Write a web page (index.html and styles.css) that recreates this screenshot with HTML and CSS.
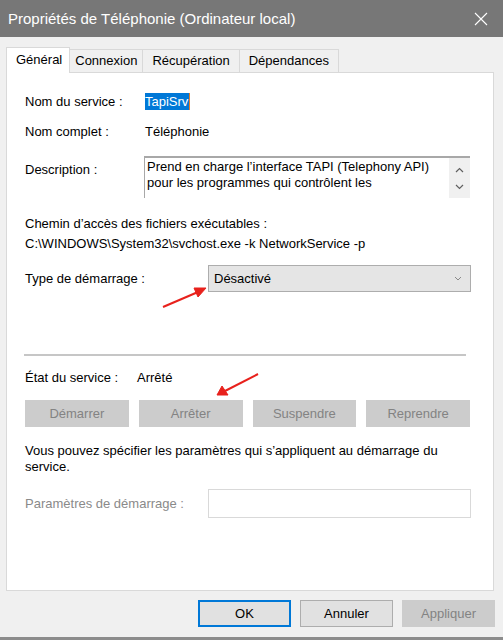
FILE: index.html
```html
<!DOCTYPE html>
<html lang="fr">
<head>
<meta charset="utf-8">
<title>Propriétés de Téléphonie</title>
<link rel="stylesheet" href="styles.css">
</head>
<body>
<div class="window">
  <div class="titlebar">
    <span class="title">Propriétés de Téléphonie (Ordinateur local)</span>
    <svg class="close" width="14" height="14" viewBox="0 0 14 14"><path d="M1 1 L13 13 M13 1 L1 13" stroke="#ffffff" stroke-width="1.1" fill="none"/></svg>
  </div>
  <div class="tabs">
    <div class="tab active">Général</div>
    <div class="tab">Connexion</div>
    <div class="tab wide-tab">Récupération</div>
    <div class="tab wide-tab">Dépendances</div>
  </div>
  <div class="panel">
    <div class="row r-name"><span class="label">Nom du service :</span><span class="selected">TapiSrv</span></div>
    <div class="row r-full"><span class="label">Nom complet :</span><span>Téléphonie</span></div>
    <div class="row r-desc">
      <span class="label desc-label">Description :</span>
      <div class="textarea">
        <div class="ta-text">Prend en charge l’interface TAPI (Telephony API)<br>pour les programmes qui contrôlent les</div>
        <div class="scroll">
          <svg width="9" height="6" viewBox="0 0 9 6"><path d="M1 5 L4.5 1.5 L8 5" stroke="#606060" stroke-width="1.2" fill="none"/></svg>
          <svg width="9" height="6" viewBox="0 0 9 6"><path d="M1 1 L4.5 4.5 L8 1" stroke="#606060" stroke-width="1.2" fill="none"/></svg>
        </div>
      </div>
    </div>
    <div class="path-label">Chemin d’accès des fichiers exécutables :</div>
    <div class="path">C:\WINDOWS\System32\svchost.exe -k NetworkService -p</div>
    <div class="row r-type">
      <span class="label wide">Type de démarrage :</span>
      <div class="combo"><span>Désactivé</span><svg width="8" height="5" viewBox="0 0 8 5"><path d="M1 1 L4 4 L7 1" stroke="#8a8a8a" stroke-width="1" fill="none"/></svg></div>
    </div>
    <div class="sep"></div>
    <div class="row r-state"><span class="label state">État du service :</span><span>Arrêté</span></div>
    <div class="btn-row">
      <div class="btn disabled">Démarrer</div>
      <div class="btn disabled">Arrêter</div>
      <div class="btn disabled">Suspendre</div>
      <div class="btn disabled">Reprendre</div>
    </div>
    <p class="info">Vous pouvez spécifier les paramètres qui s’appliquent au démarrage du<br>service.</p>
    <div class="row r-params">
      <span class="label wide muted">Paramètres de démarrage :</span>
      <div class="input"></div>
    </div>
  </div>
  <div class="footer">
    <div class="fbtn default">OK</div>
    <div class="fbtn">Annuler</div>
    <div class="fbtn disabled">Appliquer</div>
  </div>
  <svg class="annot" width="503" height="640" viewBox="0 0 503 640">
    <g stroke="#e8211c" stroke-width="2" fill="#e8211c">
      <line x1="163" y1="307" x2="198" y2="292"/>
      <polygon points="206,288 194,288 198,297" stroke-width="1"/>
      <line x1="258" y1="374" x2="225" y2="391"/>
      <polygon points="217,395 222,386 228,395" stroke-width="1"/>
    </g>
  </svg>
</div>
</body>
</html>
```
FILE: styles.css
```css
html, body {
  margin: 0;
  padding: 0;
}
body {
  background: #f0f0f0;
  font-family: "Liberation Sans", Arial, sans-serif;
  font-size: 13px;
  color: #000;
}
.window {
  position: relative;
  width: 503px;
  height: 640px;
  box-sizing: border-box;
  background: #f0f0f0;
  border-bottom: 3px solid #8c8c8c;
  overflow: hidden;
}
.titlebar {
  height: 37px;
  background: #777777;
  display: flex;
  align-items: center;
  justify-content: space-between;
  padding: 0 15px 0 8px;
}
.title {
  color: #ffffff;
  font-size: 15px;
}
.close {
  display: block;
}
.tabs {
  display: flex;
  align-items: flex-end;
  height: 26px;
  margin-top: 10px;
  margin-bottom: -1px;
  padding-left: 6px;
  position: relative;
  z-index: 1;
}
.tab {
  box-sizing: border-box;
  height: 23px;
  margin-bottom: 1px;
  margin-left: -1px;
  padding: 0 5px;
  border: 1px solid #d9d9d9;
  border-bottom: none;
  background: #f0f0f0;
  line-height: 22px;
}
.tab.wide-tab {
  padding: 0 9px;
}
.tab.active {
  height: 26px;
  margin-bottom: 0;
  margin-left: 0;
  margin-right: 0;
  padding: 0 7px 0 9px;
  background: #ffffff;
  line-height: 24px;
  position: relative;
  z-index: 2;
}
.tab.active + .tab {
  border-left: none;
  margin-left: 0;
}
.panel {
  box-sizing: border-box;
  height: 519px;
  margin: 0 9px 0 6px;
  background: #ffffff;
  border: 1px solid #d9d9d9;
  padding: 0 22px 0 18px;
  display: flex;
  flex-direction: column;
}
.row {
  display: flex;
  align-items: center;
}
.label {
  width: 120px;
  flex: none;
}
.label.wide {
  width: 183px;
}
.label.state {
  width: 112px;
}
.muted {
  color: #8a8a8a;
}
.r-name {
  margin-top: 19px;
  height: 18px;
}
.selected {
  background: #0078d7;
  color: #ffffff;
  line-height: 17px;
  padding: 0 1px 0 0;
  border-right: 1px solid #e07a2a;
}
.r-full {
  margin-top: 12px;
  height: 18px;
}
.r-desc {
  margin-top: 16px;
  align-items: flex-start;
}
.desc-label {
  width: 119px;
  margin-top: 6px;
  line-height: 16px;
}
.textarea {
  box-sizing: border-box;
  width: 326px;
  height: 42px;
  border-top: 2px solid #a8a8a8;
  border-left: 1px solid #a8a8a8;
  display: flex;
  justify-content: space-between;
}
.ta-text {
  padding: 1px 0 0 2px;
  line-height: 16px;
  white-space: nowrap;
}
.scroll {
  width: 21px;
  background: #f0f0f0;
  display: flex;
  flex-direction: column;
  align-items: center;
  justify-content: space-around;
  padding: 4px 0 3px;
  box-sizing: border-box;
}
.scroll svg {
  display: block;
}
.path-label {
  margin-top: 18px;
  line-height: 16px;
}
.path {
  margin-top: 4px;
  line-height: 16px;
}
.r-type {
  margin-top: 13px;
}
.combo {
  box-sizing: border-box;
  width: 264px;
  height: 27px;
  background: #e5e5e5;
  border: 1px solid #adadad;
  display: flex;
  align-items: center;
  justify-content: space-between;
  padding: 0 8px 0 5px;
}
.combo svg {
  display: block;
}
.sep {
  margin-top: 62px;
  height: 2px;
  margin-left: -1px;
  margin-right: 5px;
  background: #c6c6c6;
}
.r-state {
  margin-top: 14px;
  line-height: 16px;
}
.btn-row {
  margin-top: 14px;
  display: grid;
  grid-template-columns: repeat(4, 1fr);
  column-gap: 10px;
  margin-right: 1px;
}
.btn {
  height: 27px;
  display: flex;
  align-items: center;
  justify-content: center;
  background: #cccccc;
  color: #838383;
}
.info {
  margin: 16px 0 0;
  line-height: 16px;
}
.r-params {
  margin-top: 14px;
}
.input {
  box-sizing: border-box;
  width: 264px;
  height: 29px;
  border: 1px solid #d9d9d9;
  background: #ffffff;
}
.footer {
  display: flex;
  justify-content: flex-end;
  gap: 9px;
  margin-top: 9px;
  padding-right: 8px;
}
.fbtn {
  box-sizing: border-box;
  width: 93px;
  height: 27px;
  display: flex;
  align-items: center;
  justify-content: center;
  background: #e1e1e1;
  border: 1px solid #adadad;
}
.fbtn.default {
  border: 2px solid #0078d7;
}
.fbtn.disabled {
  background: #cccccc;
  border-color: #cccccc;
  color: #838383;
}
.annot {
  position: absolute;
  left: 0;
  top: 0;
  pointer-events: none;
}
```
